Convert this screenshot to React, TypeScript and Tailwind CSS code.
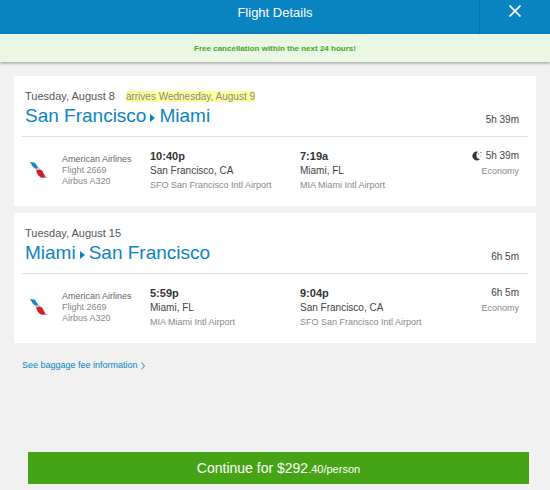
import React from "react";

interface Stop {
  time: string;
  city: string;
  airport: string;
}

interface Flight {
  date: string;
  arrives?: string;
  from: string;
  to: string;
  duration: string;
  overnight?: boolean;
  depart: Stop;
  arrive: Stop;
}

const flights: Flight[] = [
  {
    date: "Tuesday, August 8",
    arrives: "arrives Wednesday, August 9",
    from: "San Francisco",
    to: "Miami",
    duration: "5h 39m",
    overnight: true,
    depart: { time: "10:40p", city: "San Francisco, CA", airport: "SFO San Francisco Intl Airport" },
    arrive: { time: "7:19a", city: "Miami, FL", airport: "MIA Miami Intl Airport" },
  },
  {
    date: "Tuesday, August 15",
    from: "Miami",
    to: "San Francisco",
    duration: "6h 5m",
    depart: { time: "5:59p", city: "Miami, FL", airport: "MIA Miami Intl Airport" },
    arrive: { time: "9:04p", city: "San Francisco, CA", airport: "SFO San Francisco Intl Airport" },
  },
];

function AirlineLogo() {
  return (
    <svg viewBox="0 0 18 18" className="h-[18px] w-[18px]" aria-hidden="true">
      <path d="M0 1C3 .8 5 1.500 6 3.200L8.500 7.500 6.500 8C4 7 2.500 5.500 1.500 3.500Z" fill="#1b87c4" />
      <path d="M5.500 8.500 8.500 6.500 11.500 9 7 10.500Z" fill="#c3c8cc" />
      <path d="M6.200 9.500C8 8.300 11 8.300 12.500 10.200L16 16.800H11.500C8.500 15.500 6.500 12.500 6.200 9.500Z" fill="#d3202b" />
      <path d="M15 16.800h3l-1-.8h-2.500Z" fill="#c9a5a9" />
    </svg>
  );
}

function MoonIcon() {
  return (
    <svg viewBox="0 0 10 10" className="h-[10px] w-[10px]" aria-hidden="true">
      <path d="M5.500.8A4.200 4.200 0 1 0 7.500 8.200C4 8 3 3.500 5.500.8Z" fill="#333" stroke="#333" strokeWidth=".5" />
      <circle cx="6.500" cy="3" r=".7" fill="#777" />
      <circle cx="9" cy="1.500" r=".8" fill="#888" />
      <circle cx="8.500" cy="4.800" r=".6" fill="#999" />
    </svg>
  );
}

function StopInfo({ stop }: { stop: Stop }) {
  return (
    <div>
      <p className="text-[11px] leading-[14px] font-bold text-[#333]">{stop.time}</p>
      <p className="text-[10px] leading-[15px] text-[#444]">{stop.city}</p>
      <p className="text-[9px] leading-[15px] text-[#888]">{stop.airport}</p>
    </div>
  );
}

function FlightCard({ flight }: { flight: Flight }) {
  return (
    <section className="bg-white px-2 pt-[13px] pb-[13px]">
      <div className="flex items-end justify-between border-b border-[#ddd] pr-[9px] pb-2 pl-[3px]">
        <div>
          <p className="flex items-center gap-[11px] text-[11px] leading-[15px] text-[#555]">
            {flight.date}
            {flight.arrives && (
              <mark className="bg-[#ffff99] text-[10px] leading-[11px] text-[#888]">{flight.arrives}</mark>
            )}
          </p>
          <h2 className="flex items-center gap-1 text-[19px] leading-6 text-[#0a84c1]">
            {flight.from}
            <svg viewBox="0 0 5 8" className="mt-[3px] h-2 w-[5px]" role="img" aria-label="to">
              <path d="M0 0 5 4 0 8Z" fill="#0a84c1" />
            </svg>
            {flight.to}
          </h2>
        </div>
        <p className="pb-px text-[10px] leading-[14px] text-[#444]">{flight.duration}</p>
      </div>

      <div className="grid grid-cols-[40px_88px_150px_1fr_auto] pt-3 pr-[9px]">
        <div className="pt-3 pl-2">
          <AirlineLogo />
        </div>
        <div className="pt-[5px] text-[9px] leading-[11px] text-[#888]">
          <p className="text-[#666]">American Airlines</p>
          <p>Flight 2669</p>
          <p>Airbus A320</p>
        </div>
        <StopInfo stop={flight.depart} />
        <StopInfo stop={flight.arrive} />
        <div className="text-right">
          <p className="flex items-center justify-end gap-1 text-[10px] leading-[14px] text-[#444]">
            {flight.overnight && <MoonIcon />}
            {flight.duration}
          </p>
          <p className="text-[9px] leading-[17px] text-[#888]">Economy</p>
        </div>
      </div>
    </section>
  );
}

export default function App() {
  return (
    <div className="flex min-h-screen flex-col bg-[#f1f1f1] font-['Liberation_Sans',Arial,sans-serif]">
      <header className="grid grid-cols-[71px_1fr_71px] bg-[#0a84c1] text-white">
        <h1 className="col-start-2 pt-1 pb-3 text-center text-[13px] leading-[18px]">Flight Details</h1>
        <button type="button" aria-label="Close" className="flex justify-center border-l border-[#0870ad] pt-[5px]">
          <svg viewBox="0 0 12 12" className="h-3 w-3" aria-hidden="true">
            <path d="M.5.5l11 11M11.500.5l-11 11" stroke="white" strokeWidth="1.800" />
          </svg>
        </button>
      </header>
      <p className="bg-[#eaf7e2] pt-[9px] pb-2 text-center text-[8px] leading-[11px] font-bold text-[#49a32b] shadow-[0_1px_3px_rgba(0,0,0,0.4)]">
        Free cancellation within the next 24 hours!
      </p>

      <main className="flex flex-1 flex-col px-[14px] pt-[14px] pb-[6px]">
        <div className="flex flex-col gap-[7px]">
          {flights.map((flight) => (
            <FlightCard key={flight.date} flight={flight} />
          ))}
        </div>
        <a href="#" className="mt-4 ml-2 flex items-center gap-[3px] self-start text-[9px] leading-[13px] text-[#0a84c1]">
          See baggage fee information
          <svg viewBox="0 0 4 8" className="h-2 w-1" aria-hidden="true">
            <path d="M.5.5 3.500 4 .5 7.500" fill="none" stroke="#0a84c1" />
          </svg>
        </a>
        <button
          type="button"
          className="mt-auto mr-[7px] ml-[14px] bg-[#47a316] text-center text-[14px] leading-8 text-white"
        >
          Continue for $292<span className="text-[11px] leading-none">.40/person</span>
        </button>
      </main>
    </div>
  );
}
